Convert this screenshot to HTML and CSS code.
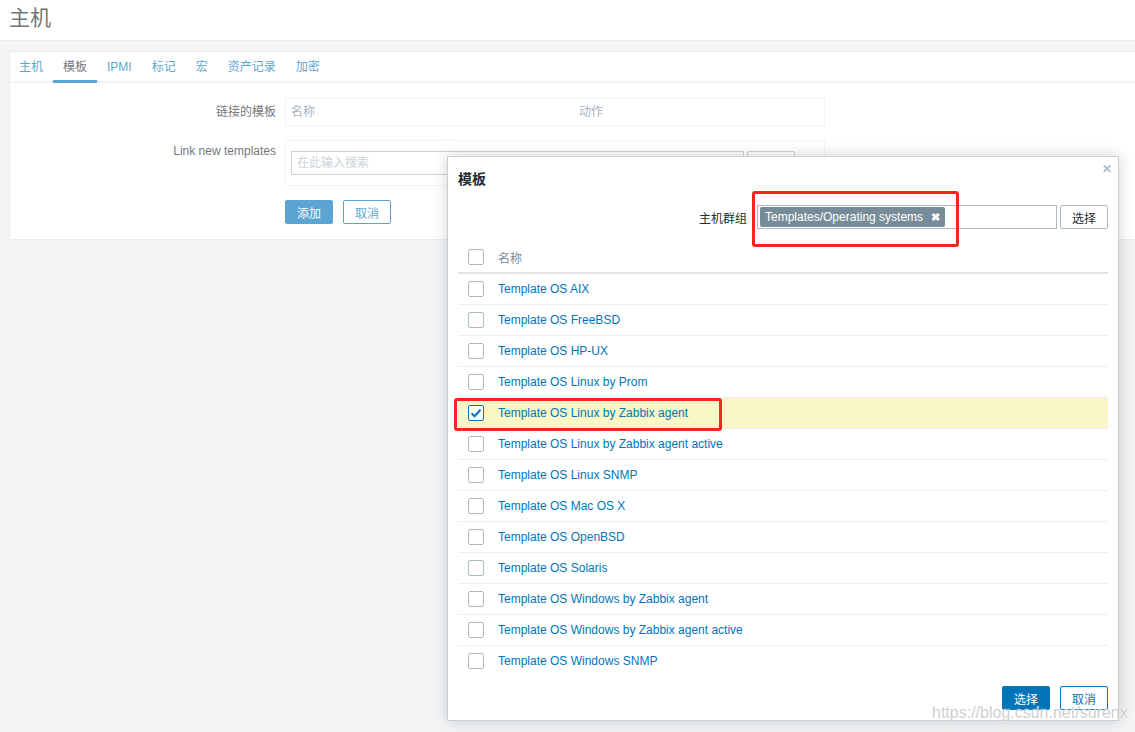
FILE: index.html
```html
<!DOCTYPE html>
<html lang="zh">
<head>
<meta charset="utf-8">
<title>主机</title>
<link rel="stylesheet" href="styles.css">
</head>
<body>
<header class="page-header"><h1 class="page-title">主机</h1></header>
<main class="content">
  <section class="panel">
    <nav class="tabs">
      <span class="tab">主机</span>
      <span class="tab active">模板</span>
      <span class="tab">IPMI</span>
      <span class="tab">标记</span>
      <span class="tab">宏</span>
      <span class="tab">资产记录</span>
      <span class="tab">加密</span>
    </nav>
    <div class="form">
      <div class="form-row">
        <div class="form-label">链接的模板</div>
        <div class="linked-table"><span>名称</span><span>动作</span></div>
      </div>
      <div class="form-row">
        <div class="form-label label-top">Link new templates</div>
        <div class="field-box">
          <div class="search-input">在此输入搜索</div>
          <button class="btn-grey">选择</button>
        </div>
      </div>
      <div class="form-row">
        <div class="form-label"></div>
        <div class="actions">
          <button class="btn-primary">添加</button>
          <button class="btn-alt">取消</button>
        </div>
      </div>
    </div>
  </section>
</main>

<div class="overlay-bg"></div>

<div class="dialog">
  <div class="dialog-title">模板</div>
  <span class="dialog-close">✕</span>
  <div class="filter-row">
    <span class="filter-label">主机群组</span>
    <div class="multiselect">
      <span class="ms-tag">Templates/Operating systems<span class="ms-x">✖</span></span>
    </div>
    <button class="btn-grey">选择</button>
  </div>
  <div class="list">
    <div class="list-head"><span class="cb"></span><span class="head-name">名称</span></div>
    <div class="list-row"><span class="cb"></span><a class="link">Template OS AIX</a></div>
    <div class="list-row"><span class="cb"></span><a class="link">Template OS FreeBSD</a></div>
    <div class="list-row"><span class="cb"></span><a class="link">Template OS HP-UX</a></div>
    <div class="list-row"><span class="cb"></span><a class="link">Template OS Linux by Prom</a></div>
    <div class="list-row selected"><span class="cb checked"><svg width="12" height="10" viewBox="0 0 12 10"><path d="M1.5 5.2 L4.6 8.2 L10.5 1.8" fill="none" stroke="#0275b8" stroke-width="2"/></svg></span><a class="link">Template OS Linux by Zabbix agent</a></div>
    <div class="list-row"><span class="cb"></span><a class="link">Template OS Linux by Zabbix agent active</a></div>
    <div class="list-row"><span class="cb"></span><a class="link">Template OS Linux SNMP</a></div>
    <div class="list-row"><span class="cb"></span><a class="link">Template OS Mac OS X</a></div>
    <div class="list-row"><span class="cb"></span><a class="link">Template OS OpenBSD</a></div>
    <div class="list-row"><span class="cb"></span><a class="link">Template OS Solaris</a></div>
    <div class="list-row"><span class="cb"></span><a class="link">Template OS Windows by Zabbix agent</a></div>
    <div class="list-row"><span class="cb"></span><a class="link">Template OS Windows by Zabbix agent active</a></div>
    <div class="list-row last"><span class="cb"></span><a class="link">Template OS Windows SNMP</a></div>
  </div>
  <div class="dialog-footer">
    <button class="btn-primary">选择</button>
    <button class="btn-alt">取消</button>
  </div>
</div>

<div class="mark mark-group"></div>
<div class="mark mark-row"></div>
<div class="watermark">https://blog.csdn.net/surenx</div>
</body>
</html>
```

FILE: styles.css
```css
* { box-sizing: border-box; }
html, body { margin: 0; padding: 0; }
body {
  width: 1135px;
  height: 732px;
  overflow: hidden;
  position: relative;
  background: #ebeef0;
  font-family: "Liberation Sans", Arial, "Noto Sans CJK SC", sans-serif;
  font-size: 12px;
  color: #1f2c33;
}
button { font-family: inherit; font-size: 12px; cursor: pointer; }

.page-header {
  height: 41px;
  background: #fff;
  border-bottom: 1px solid #dfe4e7;
  padding-left: 9px;
}
.page-title {
  margin: 0;
  font-weight: normal;
  font-size: 21px;
  line-height: 36px;
  color: #1f2c33;
}

.content { padding: 10px 0 0 9px; }
.panel {
  background: #fff;
  border: 1px solid #dfe4e7;
  border-right: none;
  height: 189px;
}
.tabs {
  display: flex;
  height: 31px;
  border-bottom: 2px solid #ebeef0;
}
.tab {
  padding: 0 10px;
  line-height: 31px;
  color: #0275b8;
  height: 31px;
}
.tab:first-child { padding-left: 9px; }
.tab.active {
  color: #1f2c33;
  border-bottom: 3px solid #0275b8;
}

.form { padding-top: 15px; }
.form-row {
  display: grid;
  grid-template-columns: 266px 540px;
  column-gap: 9px;
  margin-bottom: 14px;
}
.form-label {
  text-align: right;
  line-height: 24px;
  padding-top: 2px;
}
.label-top { padding-top: 0; line-height: 22px; }
.linked-table {
  height: 28px;
  border: 1px solid #ebeef0;
  display: grid;
  grid-template-columns: 288px 1fr;
  padding: 0 5px;
  line-height: 26px;
  color: #768d99;
}
.field-box {
  height: 46px;
  border: 1px solid #ebeef0;
  padding: 10px 5px 0 5px;
  display: flex;
  gap: 3px;
}
.search-input {
  width: 453px;
  height: 24px;
  border: 1px solid #acbbc2;
  padding-left: 5px;
  line-height: 22px;
  color: #acbbc2;
}
.btn-grey {
  width: 48px;
  height: 24px;
  border: 1px solid #acbbc2;
  border-radius: 2px;
  background: #fff;
  color: #1f2c33;
  padding: 0;
}
.actions { display: flex; gap: 10px; }
.btn-primary {
  width: 48px;
  height: 24px;
  border: 1px solid #0275b8;
  border-radius: 2px;
  background: #0275b8;
  color: #fff;
  padding: 0;
}
.btn-alt {
  width: 48px;
  height: 24px;
  border: 1px solid #0275b8;
  border-radius: 2px;
  background: #fff;
  color: #0275b8;
  padding: 0;
}

.overlay-bg {
  position: absolute;
  inset: 0;
  background: rgba(255, 255, 255, 0.35);
}

.dialog {
  position: absolute;
  left: 447px;
  top: 156px;
  width: 672px;
  background: #fff;
  border: 1px solid #c6d0d5;
  box-shadow: 0 0 14px rgba(0, 0, 0, 0.18);
  padding: 0 10px 10px;
}
.dialog-title {
  padding-top: 14px;
  line-height: 16px;
  font-size: 14px;
  font-weight: bold;
  color: #1f2c33;
}
.dialog-close {
  position: absolute;
  right: 6px;
  top: 5px;
  color: #acbbc2;
  font-size: 12px;
  font-weight: bold;
}
.filter-row {
  margin-top: 18px;
  display: flex;
  justify-content: flex-end;
  align-items: center;
  height: 24px;
}
.filter-label { margin-right: 10px; }
.multiselect {
  width: 300px;
  height: 24px;
  border: 1px solid #acbbc2;
  padding: 1px 2px;
  margin-right: 3px;
}
.ms-tag {
  display: inline-flex;
  align-items: center;
  height: 20px;
  background: #768d99;
  color: #fff;
  border-radius: 2px;
  padding: 0 5px 0 5px;
  white-space: nowrap;
}
.ms-x {
  margin-left: 8px;
  font-size: 11px;
  font-weight: bold;
}

.list { margin-top: 14px; }
.list-head {
  height: 31px;
  border-bottom: 2px solid #dfe4e7;
  display: flex;
  align-items: center;
  padding-left: 10px;
  color: #768d99;
  padding-bottom: 1px;
}
.list-row {
  height: 31px;
  border-bottom: 1px solid #ebeef0;
  display: flex;
  align-items: center;
  padding-left: 10px;
}
.list-row.last { border-bottom-color: transparent; }
.list-row.selected { background: #fbf6c5; }
.cb {
  width: 16px;
  height: 16px;
  border: 1px solid #acbbc2;
  border-radius: 2px;
  background: #fff;
  margin-right: 14px;
  flex: none;
  display: flex;
  align-items: center;
  justify-content: center;
}
.cb.checked { border-color: #0275b8; }
.link { color: #0275b8; text-decoration: none; }

.dialog-footer {
  display: flex;
  justify-content: flex-end;
  gap: 10px;
  margin-top: 9px;
}

.mark {
  position: absolute;
  border: 3px solid #f5241d;
  border-radius: 3px;
}
.mark-group { left: 752px; top: 191px; width: 207px; height: 56px; }
.mark-row { left: 454px; top: 398px; width: 268px; height: 33px; }

.watermark {
  position: absolute;
  left: 932px;
  top: 704px;
  font-size: 16px;
  color: rgba(190, 190, 190, 0.75);
  text-shadow: 0 0 1px #fff;
  white-space: nowrap;
}
```
